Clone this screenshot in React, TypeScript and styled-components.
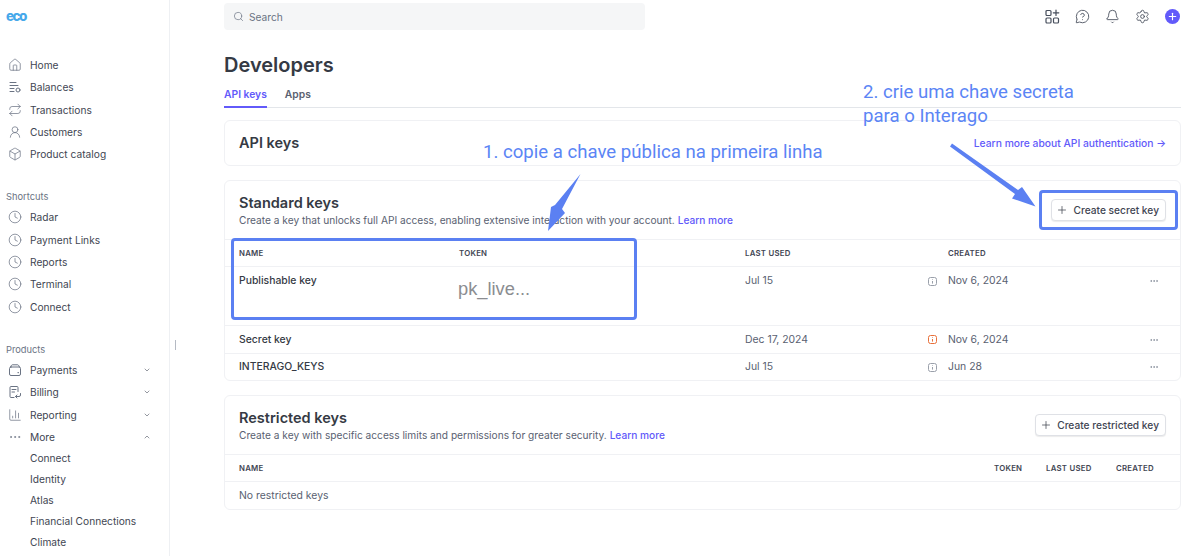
import React from 'react';
import styled, { createGlobalStyle } from 'styled-components';
import {
  Bell,
  Box,
  ChartColumn,
  ChevronDown,
  ChevronUp,
  Clock,
  Ellipsis,
  House,
  MessageCircleQuestion,
  Plus,
  Repeat,
  Search,
  Settings,
  UserRound,
} from 'lucide-react';

const GlobalStyle = createGlobalStyle`
  html, body {
    margin: 0;
    height: 556px;
    overflow: hidden;
    background: #fff;
    font-family: Inter, "Liberation Sans", sans-serif;
    color: #414552;
  }
  * { box-sizing: border-box; }
`;

const Page = styled.div`
  position: relative;
  display: flex;
  width: 1200px;
  height: 556px;
  overflow: hidden;
`;

const Sidebar = styled.nav`
  flex: 0 0 170px;
  height: 556px;
  border-right: 1px solid #eef0f3;
  padding: 8px 0 0 6px;
  overflow: hidden;
`;

const Logo = styled.div`
  width: 19px;
  height: 17px;
  font-size: 13.5px;
  line-height: 17px;
  font-weight: 800;
  letter-spacing: -1.6px;
  color: #46a8ea;
`;

const NavGroup = styled.div<{ $top: number }>`
  margin-top: ${(p) => p.$top}px;
`;

const GroupLabel = styled.div`
  height: 17px;
  font-size: 9.3px;
  line-height: 16px;
  color: #6a7383;
`;

const NavRow = styled.div`
  display: flex;
  align-items: center;
  height: 22.4px;
  padding-left: 2px;
  font-size: 10.2px;
  color: #414552;
  svg {
    flex: none;
    color: #6a7383;
  }
`;

const NavLabel = styled.span`
  margin-left: 8px;
  flex: 1;
`;

const NavCaret = styled.span`
  display: flex;
  margin-right: 18px;
  svg {
    color: #474e5c;
  }
`;

const SubRow = styled.div`
  height: 21px;
  padding-left: 24px;
  font-size: 10.2px;
  line-height: 21px;
  color: #414552;
`;

const Handle = styled.div`
  position: absolute;
  left: 175px;
  top: 340px;
  width: 1px;
  height: 10px;
  background: #b5bac3;
`;

const Main = styled.main`
  flex: 1;
  min-width: 0;
  padding: 3px 19px 0 54px;
`;

const TopBar = styled.header`
  display: flex;
  align-items: center;
  justify-content: space-between;
  height: 27px;
`;

const SearchBox = styled.div`
  display: flex;
  align-items: center;
  gap: 5px;
  width: 421px;
  height: 27px;
  padding-left: 9px;
  border-radius: 4px;
  background: #f5f6f7;
  font-size: 10.2px;
  color: #6a7383;
`;

const TopIcons = styled.div`
  display: flex;
  align-items: center;
  gap: 15px;
  margin-right: 1px;
  svg {
    display: block;
    color: #474e5c;
  }
`;

const AddCircle = styled.div`
  display: flex;
  align-items: center;
  justify-content: center;
  width: 15px;
  height: 15px;
  border-radius: 50%;
  background: #625afa;
  svg {
    color: #fff;
  }
`;

const Title = styled.h1`
  margin: 22px 0 0;
  font-size: 20px;
  line-height: 26px;
  font-weight: 600;
  color: #353a44;
`;

const Tabs = styled.div`
  display: flex;
  gap: 18px;
  margin-top: 8px;
  height: 22px;
  border-bottom: 1px solid #e3e6ea;
`;

const Tab = styled.div<{ $active?: boolean }>`
  height: 22px;
  font-size: 10.3px;
  line-height: 16px;
  font-weight: 600;
  color: ${(p) => (p.$active ? '#625afa' : '#5a6170')};
  border-bottom: 2px solid ${(p) => (p.$active ? '#625afa' : 'transparent')};
`;

const Card = styled.section<{ $top: number }>`
  margin-top: ${(p) => p.$top}px;
  border: 1px solid #f0f1f4;
  border-radius: 6px;
  background: #fff;
`;

const InlineHead = styled.div`
  display: flex;
  align-items: center;
  justify-content: space-between;
  height: 44px;
  padding: 0 14px;
`;

const CardHeading = styled.h2`
  margin: 0;
  font-size: 14.5px;
  line-height: 20px;
  font-weight: 600;
  color: #353a44;
`;

const ArrowLink = styled.a`
  font-size: 10.3px;
  font-weight: 500;
  color: #625afa;
`;

const CardHead = styled.div<{ $h: number }>`
  display: flex;
  align-items: center;
  justify-content: space-between;
  height: ${(p) => p.$h}px;
  padding: 0 14px;
`;

const Subtitle = styled.p`
  margin: 0;
  font-size: 10.17px;
  line-height: 15px;
  color: #596171;
`;

const LearnMore = styled.a`
  font-weight: 500;
  color: #625afa;
`;

const OutlineButton = styled.button`
  display: flex;
  align-items: center;
  gap: 5px;
  height: 22px;
  padding: 0 6px 0 4px;
  border: 1px solid #dfe1e6;
  border-radius: 4px;
  background: #fff;
  box-shadow: 0 1px 1px rgba(0, 0, 0, 0.08);
  font-family: inherit;
  font-size: 10.2px;
  font-weight: 500;
  color: #414552;
  svg {
    color: #414552;
  }
`;

const Row = styled.div<{ $h: number; $top?: boolean }>`
  display: grid;
  grid-template-columns: 220px 286px 183px 20px 1fr 17px;
  align-items: ${(p) => (p.$top ? 'start' : 'center')};
  height: ${(p) => p.$h}px;
  padding: ${(p) => (p.$top ? '7px' : '0')} 14px 0;
  border-top: 1px solid #f0f1f4;
  font-size: 10.4px;
  line-height: 14px;
  color: #596171;
`;

const HeaderCell = styled.div`
  font-size: 7.8px;
  font-weight: 600;
  letter-spacing: 0.25px;
  color: #414552;
  text-transform: uppercase;
`;

const KeyName = styled.div`
  font-weight: 500;
  color: #353a44;
`;

const InfoCell = styled.div`
  display: flex;
  height: 14px;
  align-items: center;
`;

const Actions = styled.div`
  display: flex;
  height: 14px;
  align-items: center;
  svg {
    color: #6a7383;
  }
`;

const RestrictedHead = styled.div`
  display: grid;
  grid-template-columns: 1fr 52px 70px 50px;
  align-items: center;
  height: 27px;
  padding: 0 14px;
  border-top: 1px solid #f0f1f4;
`;

const EmptyRow = styled.div`
  height: 28px;
  padding-left: 14px;
  border-top: 1px solid #f0f1f4;
  font-size: 10.4px;
  line-height: 27px;
  color: #596171;
`;

const Note = styled.div<{ $x: number; $y: number }>`
  position: absolute;
  left: ${(p) => p.$x}px;
  top: ${(p) => p.$y}px;
  font-family: Roboto, "Liberation Sans", sans-serif;
  font-size: 18.6px;
  line-height: 24px;
  font-weight: 400;
  color: #5b85f5;
  white-space: nowrap;
`;

const Highlight = styled.div<{ $x: number; $y: number; $w: number; $h: number }>`
  position: absolute;
  left: ${(p) => p.$x}px;
  top: ${(p) => p.$y}px;
  width: ${(p) => p.$w}px;
  height: ${(p) => p.$h}px;
  border: 3px solid #5b80f2;
  border-radius: 4px;
`;

const TokenPreview = styled.div`
  position: absolute;
  left: 458px;
  top: 276px;
  font-family: "Liberation Sans", sans-serif;
  font-size: 18.3px;
  line-height: 26px;
  color: #8b8d91;
`;

const ArrowLayer = styled.svg`
  position: absolute;
  left: 0;
  top: 0;
  pointer-events: none;
`;

function BalancesIcon() {
  return (
    <svg width="14" height="14" viewBox="0 0 14 14" fill="none" stroke="currentColor" strokeWidth="1" strokeLinecap="round">
      <path d="M2 2.5h6M2 5.5h8M2 8.5h4M2 11.5h4" />
      <circle cx="10" cy="10" r="2" />
    </svg>
  );
}

function WalletIcon() {
  return (
    <svg width="14" height="14" viewBox="0 0 14 14" fill="none" stroke="currentColor" strokeWidth="1" strokeLinecap="round">
      <rect x="1.5" y="4" width="11" height="8.5" rx="1.5" />
      <path d="M2.5 4 3.5 2.3a1 1 0 0 1 .9-.5h5.2a1 1 0 0 1 .9.5L11.5 4" />
      <path d="M10 9.6h.4" strokeWidth="1.2" />
    </svg>
  );
}

function BillingIcon() {
  return (
    <svg width="14" height="14" viewBox="0 0 14 14" fill="none" stroke="currentColor" strokeWidth="1" strokeLinecap="round">
      <path d="M6 12.5H3a1 1 0 0 1-1-1V2.5a1 1 0 0 1 1-1h6a1 1 0 0 1 1 1v4" />
      <path d="M4 4.5h4M4 7h2.5" />
      <path d="M12.5 8.5v1.5a1.5 1.5 0 0 1-1.5 1.5H7.5M9 10l-1.5 1.5L9 13" />
    </svg>
  );
}

function AppsIcon() {
  return (
    <svg width="15" height="15" viewBox="0 0 15 15" fill="none" stroke="currentColor" strokeWidth="1.2">
      <rect x="1" y="1.5" width="5" height="5" rx="1" />
      <rect x="1" y="9" width="5" height="5" rx="1" />
      <rect x="8.5" y="9" width="5" height="5" rx="1" />
      <path d="M11 1v5.5M8.3 3.8h5.5" strokeLinecap="round" />
    </svg>
  );
}

function InfoSquare({ warn }: { warn?: boolean }) {
  const color = warn ? '#e8703a' : '#9aa0aa';
  return (
    <svg width="9" height="9" viewBox="0 0 9 9" fill="none" stroke={color} strokeWidth="1">
      <rect x="0.5" y="0.5" width="8" height="8" rx="2" />
      <path d="M4.5 2.3v.6M4.5 4v2.6" />
    </svg>
  );
}

const mainNav = [
  { label: 'Home', icon: <House size={14} strokeWidth={1.25} /> },
  { label: 'Balances', icon: <BalancesIcon /> },
  { label: 'Transactions', icon: <Repeat size={14} strokeWidth={1.25} /> },
  { label: 'Customers', icon: <UserRound size={14} strokeWidth={1.25} /> },
  { label: 'Product catalog', icon: <Box size={14} strokeWidth={1.25} /> },
];

const shortcuts = ['Radar', 'Payment Links', 'Reports', 'Terminal', 'Connect'];

const products = [
  { label: 'Payments', icon: <WalletIcon />, open: false },
  { label: 'Billing', icon: <BillingIcon />, open: false },
  { label: 'Reporting', icon: <ChartColumn size={14} strokeWidth={1.25} />, open: false },
  { label: 'More', icon: <Ellipsis size={14} strokeWidth={1.25} />, open: true },
];

const moreLinks = ['Connect', 'Identity', 'Atlas', 'Financial Connections', 'Climate'];

const keys = [
  { name: 'Publishable key', used: 'Jul 15', created: 'Nov 6, 2024', h: 59, top: true },
  { name: 'Secret key', used: 'Dec 17, 2024', created: 'Nov 6, 2024', h: 28, warn: true },
  { name: 'INTERAGO_KEYS', used: 'Jul 15', created: 'Jun 28', h: 27 },
];

export default function App(): JSX.Element {
  return (
    <Page>
      <GlobalStyle />
      <Sidebar>
        <Logo>eco</Logo>
        <NavGroup $top={28.6}>
          {mainNav.map((item) => (
            <NavRow key={item.label}>
              {item.icon}
              <NavLabel>{item.label}</NavLabel>
            </NavRow>
          ))}
        </NavGroup>
        <NavGroup $top={23.4}>
          <GroupLabel>Shortcuts</GroupLabel>
          {shortcuts.map((label) => (
            <NavRow key={label}>
              <Clock size={14} strokeWidth={1.25} />
              <NavLabel>{label}</NavLabel>
            </NavRow>
          ))}
        </NavGroup>
        <NavGroup $top={24}>
          <GroupLabel>Products</GroupLabel>
          {products.map((item) => (
            <NavRow key={item.label}>
              {item.icon}
              <NavLabel>{item.label}</NavLabel>
              <NavCaret>
                {item.open ? <ChevronUp size={8} strokeWidth={1.75} /> : <ChevronDown size={8} strokeWidth={1.75} />}
              </NavCaret>
            </NavRow>
          ))}
          {moreLinks.map((label) => (
            <SubRow key={label}>{label}</SubRow>
          ))}
        </NavGroup>
      </Sidebar>
      <Handle />
      <Main>
        <TopBar>
          <SearchBox>
            <Search size={11} strokeWidth={1.5} />
            Search
          </SearchBox>
          <TopIcons>
            <AppsIcon />
            <MessageCircleQuestion size={15} strokeWidth={1.4} />
            <Bell size={15} strokeWidth={1.4} />
            <Settings size={15} strokeWidth={1.4} />
            <AddCircle>
              <Plus size={11} strokeWidth={2.5} />
            </AddCircle>
          </TopIcons>
        </TopBar>
        <Title>Developers</Title>
        <Tabs>
          <Tab $active>API keys</Tab>
          <Tab>Apps</Tab>
        </Tabs>
        <Card $top={12}>
          <InlineHead>
            <CardHeading>API keys</CardHeading>
            <ArrowLink>Learn more about API authentication →</ArrowLink>
          </InlineHead>
        </Card>
        <Card $top={14}>
          <CardHead $h={58}>
            <div>
              <CardHeading>Standard keys</CardHeading>
              <Subtitle>
                Create a key that unlocks full API access, enabling extensive interaction with your account.{' '}
                <LearnMore>Learn more</LearnMore>
              </Subtitle>
            </div>
            <OutlineButton>
              <Plus size={12} strokeWidth={1.5} />
              Create secret key
            </OutlineButton>
          </CardHead>
          <Row $h={27}>
            <HeaderCell>Name</HeaderCell>
            <HeaderCell>Token</HeaderCell>
            <HeaderCell>Last used</HeaderCell>
            <span />
            <HeaderCell>Created</HeaderCell>
          </Row>
          {keys.map((key) => (
            <Row key={key.name} $h={key.h} $top={key.top}>
              <KeyName>{key.name}</KeyName>
              <span />
              <div>{key.used}</div>
              <InfoCell>
                <InfoSquare warn={key.warn} />
              </InfoCell>
              <div>{key.created}</div>
              <Actions>
                <Ellipsis size={10} strokeWidth={1.5} />
              </Actions>
            </Row>
          ))}
        </Card>
        <Card $top={14}>
          <CardHead $h={58}>
            <div>
              <CardHeading>Restricted keys</CardHeading>
              <Subtitle>
                Create a key with specific access limits and permissions for greater security.{' '}
                <LearnMore>Learn more</LearnMore>
              </Subtitle>
            </div>
            <OutlineButton>
              <Plus size={12} strokeWidth={1.5} />
              Create restricted key
            </OutlineButton>
          </CardHead>
          <RestrictedHead>
            <HeaderCell>Name</HeaderCell>
            <HeaderCell>Token</HeaderCell>
            <HeaderCell>Last used</HeaderCell>
            <HeaderCell>Created</HeaderCell>
          </RestrictedHead>
          <EmptyRow>No restricted keys</EmptyRow>
        </Card>
      </Main>

      <TokenPreview>pk_live...</TokenPreview>
      <Highlight $x={231} $y={238} $w={406} $h={82} />
      <Highlight $x={1039} $y={190} $w={139} $h={40} />
      <Note $x={483} $y={140}>1. copie a chave pública na primeira linha</Note>
      <Note $x={863} $y={80}>2. crie uma chave secreta</Note>
      <Note $x={863} $y={104}>para o Interago</Note>
      <ArrowLayer width="1200" height="556" viewBox="0 0 1200 556">
        <path d="M580.5 174 L562 209 L565 213 L548 231 L551 207 L555 205 Z" fill="#5b80f2" />
        <path d="M952 143.5 L1018 190 L1022 187 L1035.5 206.5 L1012 198.5 L1015 194 L950 146.5 Z" fill="#5b80f2" />
      </ArrowLayer>
    </Page>
  );
}
